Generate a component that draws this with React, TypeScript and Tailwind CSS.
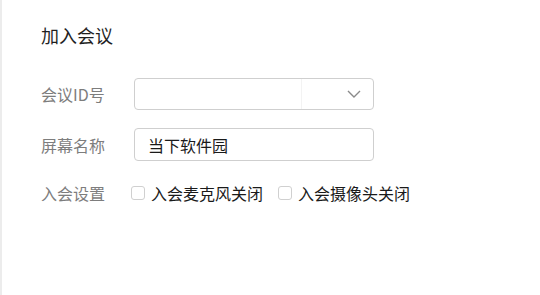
import { useState } from 'react';

const font = { fontFamily: '"Noto Sans CJK SC", "Noto Sans", sans-serif' };

const Check = ({ label }: { label: string }) => {
  const [on, setOn] = useState(false);
  return (
    <label className="flex items-center cursor-pointer" onClick={() => setOn(!on)}>
      <span
        className={`w-[14px] h-[14px] rounded-[3px] border ${
          on ? 'border-[#409eff] bg-[#409eff]' : 'border-[#d0d0d0] bg-white'
        }`}
      />
      <span className="ml-[6px] text-[16px] leading-[20px] text-[#1a1a1a]">{label}</span>
    </label>
  );
};

export default function App() {
  return (
    <div
      className="w-[540px] h-[295px] bg-white border-l-2 border-[#ececec] pl-[39px] overflow-hidden"
      style={font}
    >
      <div className="pt-[23px] text-[18px] leading-[24px] text-[#1f1f1f]">加入会议</div>

      <div className="mt-[31px] flex items-center h-[32px]">
        <div className="w-[93px] text-[16px] text-[#7d7d7d]">会议ID号</div>
        <div className="w-[240px] h-[32px] border border-[#cfcfcf] rounded-[4px] flex">
          <div className="w-[167px] border-r border-[#f3f3f3]" />
          <div className="flex-1 flex items-center justify-end pr-[12px]">
            <svg width="14" height="8" viewBox="0 0 14 8" fill="none">
              <polyline points="1,1 7,7 13,1" stroke="#8a8a8a" strokeWidth="1.4" />
            </svg>
          </div>
        </div>
      </div>

      <div className="mt-[18px] flex items-center h-[33px]">
        <div className="w-[93px] text-[16px] text-[#7d7d7d]">屏幕名称</div>
        <div className="w-[240px] h-[33px] border border-[#cfcfcf] rounded-[4px] flex items-center pl-[13px] text-[16px] text-[#1a1a1a]">
          当下软件园
        </div>
      </div>

      <div className="mt-[22px] flex items-center h-[20px]">
        <div className="w-[90px] text-[16px] text-[#7d7d7d]">入会设置</div>
        <div className="flex items-center gap-[15px]">
          <Check label="入会麦克风关闭" />
          <Check label="入会摄像头关闭" />
        </div>
      </div>
    </div>
  );
}
